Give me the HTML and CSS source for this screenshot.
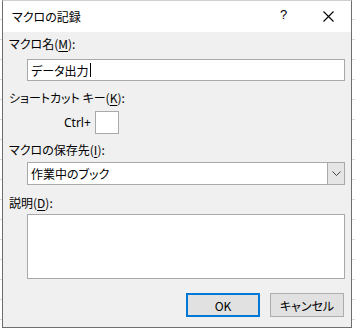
FILE: index.html
```html
<!DOCTYPE html>
<html lang="ja">
  <head>
    <meta charset="UTF-8" />
    <title>マクロの記録</title>
    <link rel="stylesheet" href="styles.css">
  </head>
  <body>
    <div class="dialog">
      <div class="titlebar">
        <span class="title">マクロの記録</span>
        <span class="help">?</span>
        <span class="close">
          <svg width="11" height="11" viewBox="0 0 11 11">
            <path d="M0.5 0.5 L10.5 10.5 M10.5 0.5 L0.5 10.5" stroke="#000" stroke-width="1.1" fill="none" />
          </svg>
        </span>
      </div>

      <div class="content">
        <label class="lbl lbl-name">マクロ名(<u>M</u>):</label>
        <div class="field name-field"><span>データ出力</span><span class="caret"></span></div>

        <label class="lbl lbl-key">ショートカット キー(<u>K</u>):</label>
        <div class="key-row">
          <span class="ctrl">Ctrl+</span>
          <div class="key-box"></div>
        </div>

        <label class="lbl lbl-store">マクロの保存先(<u>I</u>):</label>
        <div class="field select-field">
          <span class="select-text">作業中のブック</span>
          <span class="drop">
            <svg width="9" height="5" viewBox="0 0 9 5">
              <path d="M0.5 0.5 L4.5 4.5 L8.5 0.5" stroke="#444" stroke-width="1" fill="none" />
            </svg>
          </span>
        </div>

        <label class="lbl lbl-desc">説明(<u>D</u>):</label>
        <div class="field desc-field"></div>

        <div class="buttons">
          <button class="btn btn-ok">OK</button>
          <button class="btn">キャンセル</button>
        </div>
      </div>
    </div>
  </body>
</html>
```

FILE: styles.css
```css
body {
  margin: 0;
  width: 355px;
  height: 329px;
  overflow: hidden;
  background-color: #ffffff;
  background-image: repeating-linear-gradient(to bottom, transparent 0, transparent 19px, #dadada 19px, #dadada 20px);
  font-family: "Noto Sans CJK JP", "Noto Sans", sans-serif;
  font-size: 12px;
  font-feature-settings: "palt";
  color: #000;
}
.dialog {
  margin-left: 2px;
  width: 348px;
  height: 326px;
  background: #f0f0f0;
  border: 1px solid #6e6e6e;
  border-top-color: #cfcfcf;
  display: flex;
  flex-direction: column;
}
.titlebar {
  height: 31px;
  background: #ffffff;
  display: flex;
  align-items: center;
  position: relative;
}
.title {
  margin-left: 9px;
  font-size: 12px;
}
.help {
  position: absolute;
  left: 277px;
  top: 6px;
  font-family: "Liberation Sans", sans-serif;
  font-size: 13px;
}
.close {
  position: absolute;
  left: 320px;
  top: 10px;
  line-height: 0;
}
.content {
  display: flex;
  flex-direction: column;
  align-items: flex-start;
  padding-left: 6px;
}
.lbl {
  line-height: 16px;
  height: 16px;
}
.lbl u {
  text-underline-offset: 2px;
}
.lbl-name {
  margin-top: 4px;
}
.field {
  box-sizing: border-box;
  margin-left: 18px;
  width: 318px;
  background: #ffffff;
  border: 1px solid #a9a9a9;
}
.name-field {
  margin-top: 7px;
  height: 22px;
  display: flex;
  align-items: center;
  padding-left: 3px;
}
.caret {
  display: inline-block;
  width: 1px;
  height: 14px;
  background: #000;
  margin-left: 1px;
}
.lbl-key {
  margin-top: 9px;
}
.key-row {
  margin-top: 5px;
  margin-left: 55px;
  display: flex;
  align-items: center;
  gap: 4px;
  height: 23px;
}
.ctrl {
  font-family: "Noto Sans", sans-serif;
  font-size: 12px;
}
.key-box {
  box-sizing: border-box;
  width: 24px;
  height: 23px;
  background: #ffffff;
  border: 1px solid #a9a9a9;
}
.lbl-store {
  margin-top: 8px;
}
.select-field {
  margin-top: 4px;
  height: 23px;
  display: flex;
  align-items: center;
}
.select-text {
  flex: 1;
  padding-left: 3px;
}
.drop {
  box-sizing: border-box;
  width: 17px;
  height: 21px;
  background: #e5e5e5;
  border-left: 1px solid #a9a9a9;
  display: flex;
  align-items: center;
  justify-content: center;
}
.lbl-desc {
  margin-top: 10px;
}
.desc-field {
  margin-top: 3px;
  height: 65px;
}
.buttons {
  align-self: flex-end;
  margin-top: 14px;
  margin-right: 7px;
  display: flex;
  gap: 10px;
}
.btn {
  box-sizing: border-box;
  width: 74px;
  height: 24px;
  padding: 0;
  background: #e1e1e1;
  border: 1px solid #adadad;
  font-family: "Noto Sans CJK JP", "Noto Sans", sans-serif;
  font-size: 12px;
  font-feature-settings: "palt";
  color: #000;
}
.btn-ok {
  border: 2px solid #0078d7;
}
```
